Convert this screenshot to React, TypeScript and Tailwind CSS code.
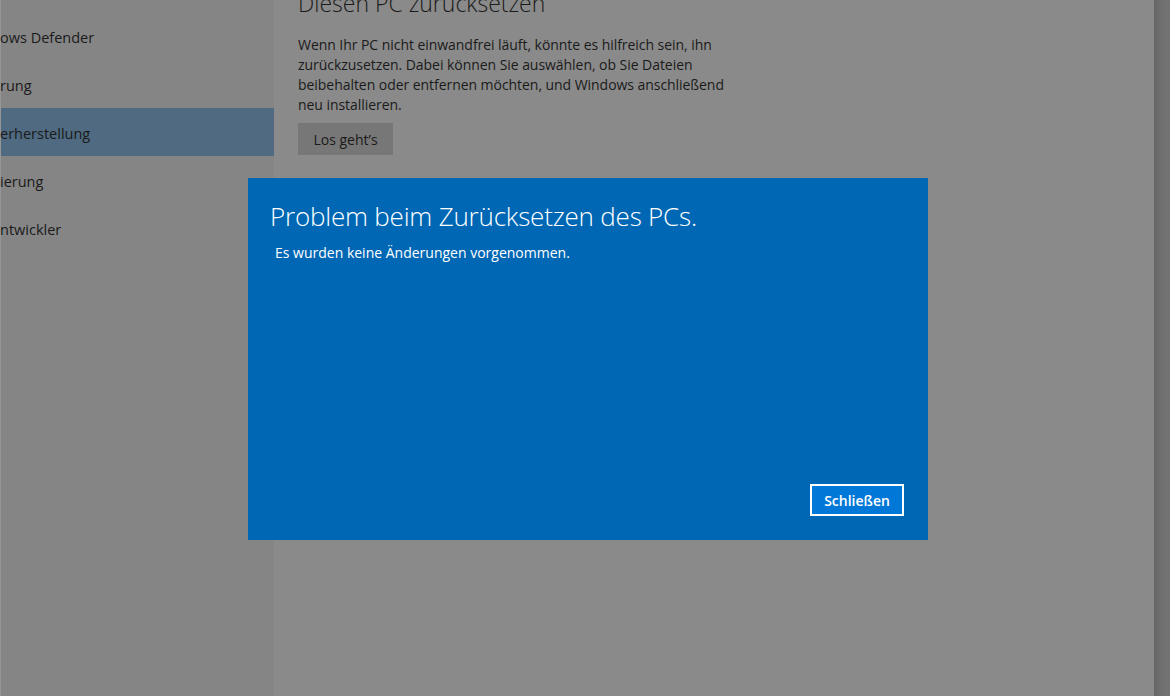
const font = { fontFamily: '"Open Sans", "Noto Sans", sans-serif' };

const navItems = [
  { label: "ows Defender", active: false },
  { label: "rung", active: false },
  { label: "erherstellung", active: true },
  { label: "ierung", active: false },
  { label: "ntwickler", active: false },
];

export default function App() {
  return (
    <div
      className="relative flex w-[1170px] h-[696px] overflow-hidden bg-[#8a8a8a] text-[#1a1a1a]"
      style={font}
    >
      {/* Sidebar */}
      <aside className="w-[274px] shrink-0 bg-[#858585] border-l border-[#969696] pt-[12px]">
        {navItems.map((item) => (
          <div
            key={item.label}
            className={`h-[48px] flex items-center text-[14.5px] whitespace-nowrap ${
              item.active ? "bg-[#4f6a81]" : ""
            }`}
          >
            <span className="-ml-[1px] pt-[3px]">{item.label}</span>
          </div>
        ))}
      </aside>

      {/* Main content */}
      <main className="flex-1 pl-[24px]">
        <h1 className="-mt-[13px] text-[23px] font-light leading-[32px] text-[#1a1a1a]">
          Diesen PC zurücksetzen
        </h1>
        <p className="mt-[16px] w-[440px] text-[14px] leading-[20px] tracking-[-0.05px]">
          Wenn Ihr PC nicht einwandfrei läuft, könnte es hilfreich sein, ihn
          zurückzusetzen. Dabei können Sie auswählen, ob Sie Dateien
          beibehalten oder entfernen möchten, und Windows anschließend neu
          installieren.
        </p>
        <button className="mt-[8px] h-[32px] w-[95px] bg-[#777777] text-[14px] text-[#1a1a1a]">
          Los geht’s
        </button>
      </main>

      {/* Scrollbar edge */}
      <div className="w-[16px] shrink-0 bg-gradient-to-r from-[#666666] via-[#707070] to-[#747474]" />

      {/* Dialog */}
      <div className="absolute left-[248px] top-[178px] w-[680px] h-[362px] bg-[#0067b4] flex flex-col pl-[22px] pr-[24px] pt-[21px] pb-[24px] text-white">
        <h2 className="text-[26px] font-light leading-[34px] tracking-[-0.2px]">
          Problem beim Zurücksetzen des PCs.
        </h2>
        <p className="mt-[10px] ml-[5px] text-[14px] leading-[20px]">
          Es wurden keine Änderungen vorgenommen.
        </p>
        <div className="mt-auto flex justify-end">
          <button className="h-[32px] w-[94px] border-2 border-white bg-[#0078d7] text-[14px] font-semibold text-white">
            Schließen
          </button>
        </div>
      </div>
    </div>
  );
}
